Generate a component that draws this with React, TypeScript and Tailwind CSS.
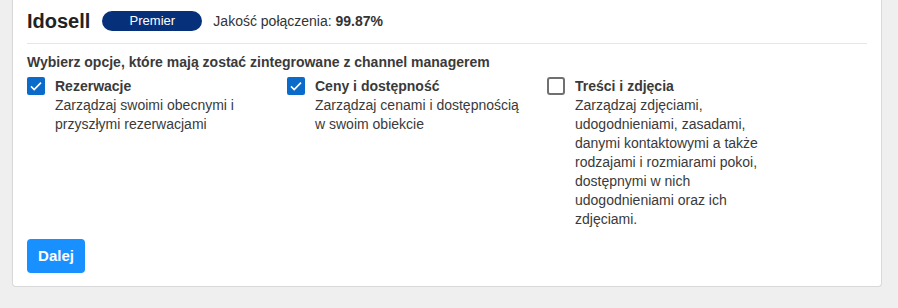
const options = [
  {
    title: 'Rezerwacje',
    desc: 'Zarządzaj swoimi obecnymi i przyszłymi rezerwacjami',
    checked: true,
  },
  {
    title: 'Ceny i dostępność',
    desc: 'Zarządzaj cenami i dostępnością w swoim obiekcie',
    checked: true,
  },
  {
    title: 'Treści i zdjęcia',
    desc: 'Zarządzaj zdjęciami, udogodnieniami, zasadami, danymi kontaktowymi a także rodzajami i rozmiarami pokoi, dostępnymi w nich udogodnieniami oraz ich zdjęciami.',
    checked: false,
  },
];

const Checkbox = ({ checked }: { checked: boolean }) =>
  checked ? (
    <span className="mt-[1px] flex h-[18px] w-[18px] shrink-0 items-center justify-center rounded-[2px] bg-[#0b6bcb]">
      <svg width="14" height="14" viewBox="0 0 14 14" fill="none">
        <path d="M2 7.4l3.2 3.2L12 3.6" stroke="white" strokeWidth="1.6" />
      </svg>
    </span>
  ) : (
    <span className="mt-[1px] h-[18px] w-[18px] shrink-0 rounded-[3px] border-2 border-[#707070] bg-white" />
  );

export default function App() {
  return (
    <div className="min-h-screen bg-[#efefef] pl-3 pr-4 font-['Liberation_Sans',Arial,sans-serif]">
      <div className="rounded-b-[4px] border border-t-0 border-[#d8d8d8] bg-white px-[14px] pt-[9px] pb-[13px]">
        <div className="flex h-6 items-center">
          <h2 className="text-[20px] font-bold leading-6 text-[#222]">Idosell</h2>
          <span className="ml-[12px] flex h-5 w-[100px] items-center justify-center rounded-full bg-[#07307a] text-[13px] font-medium text-white">
            Premier
          </span>
          <span className="ml-[11px] text-[14px] text-[#333]">
            Jakość połączenia: <b>99.87%</b>
          </span>
        </div>
        <div className="mt-[10px] border-t border-[#e6e6e6]" />
        <p className="mt-2 text-[14px] font-semibold leading-5 text-[#3a3a3a]">
          Wybierz opcje, które mają zostać zintegrowane z channel managerem
        </p>
        <div className="mt-1 flex">
          {options.map((o) => (
            <label key={o.title} className="flex w-[260px] gap-[10px]">
              <Checkbox checked={o.checked} />
              <div className="max-w-[212px] text-[14px] text-[#3a3a3a]">
                <div className="font-bold leading-5">{o.title}</div>
                <div className="leading-[19px]">{o.desc}</div>
              </div>
            </label>
          ))}
        </div>
        <button className="mt-[10px] h-[34px] w-[58px] rounded-[4px] bg-[#1890ff] text-[15px] font-semibold text-white">
          Dalej
        </button>
      </div>
    </div>
  );
}
